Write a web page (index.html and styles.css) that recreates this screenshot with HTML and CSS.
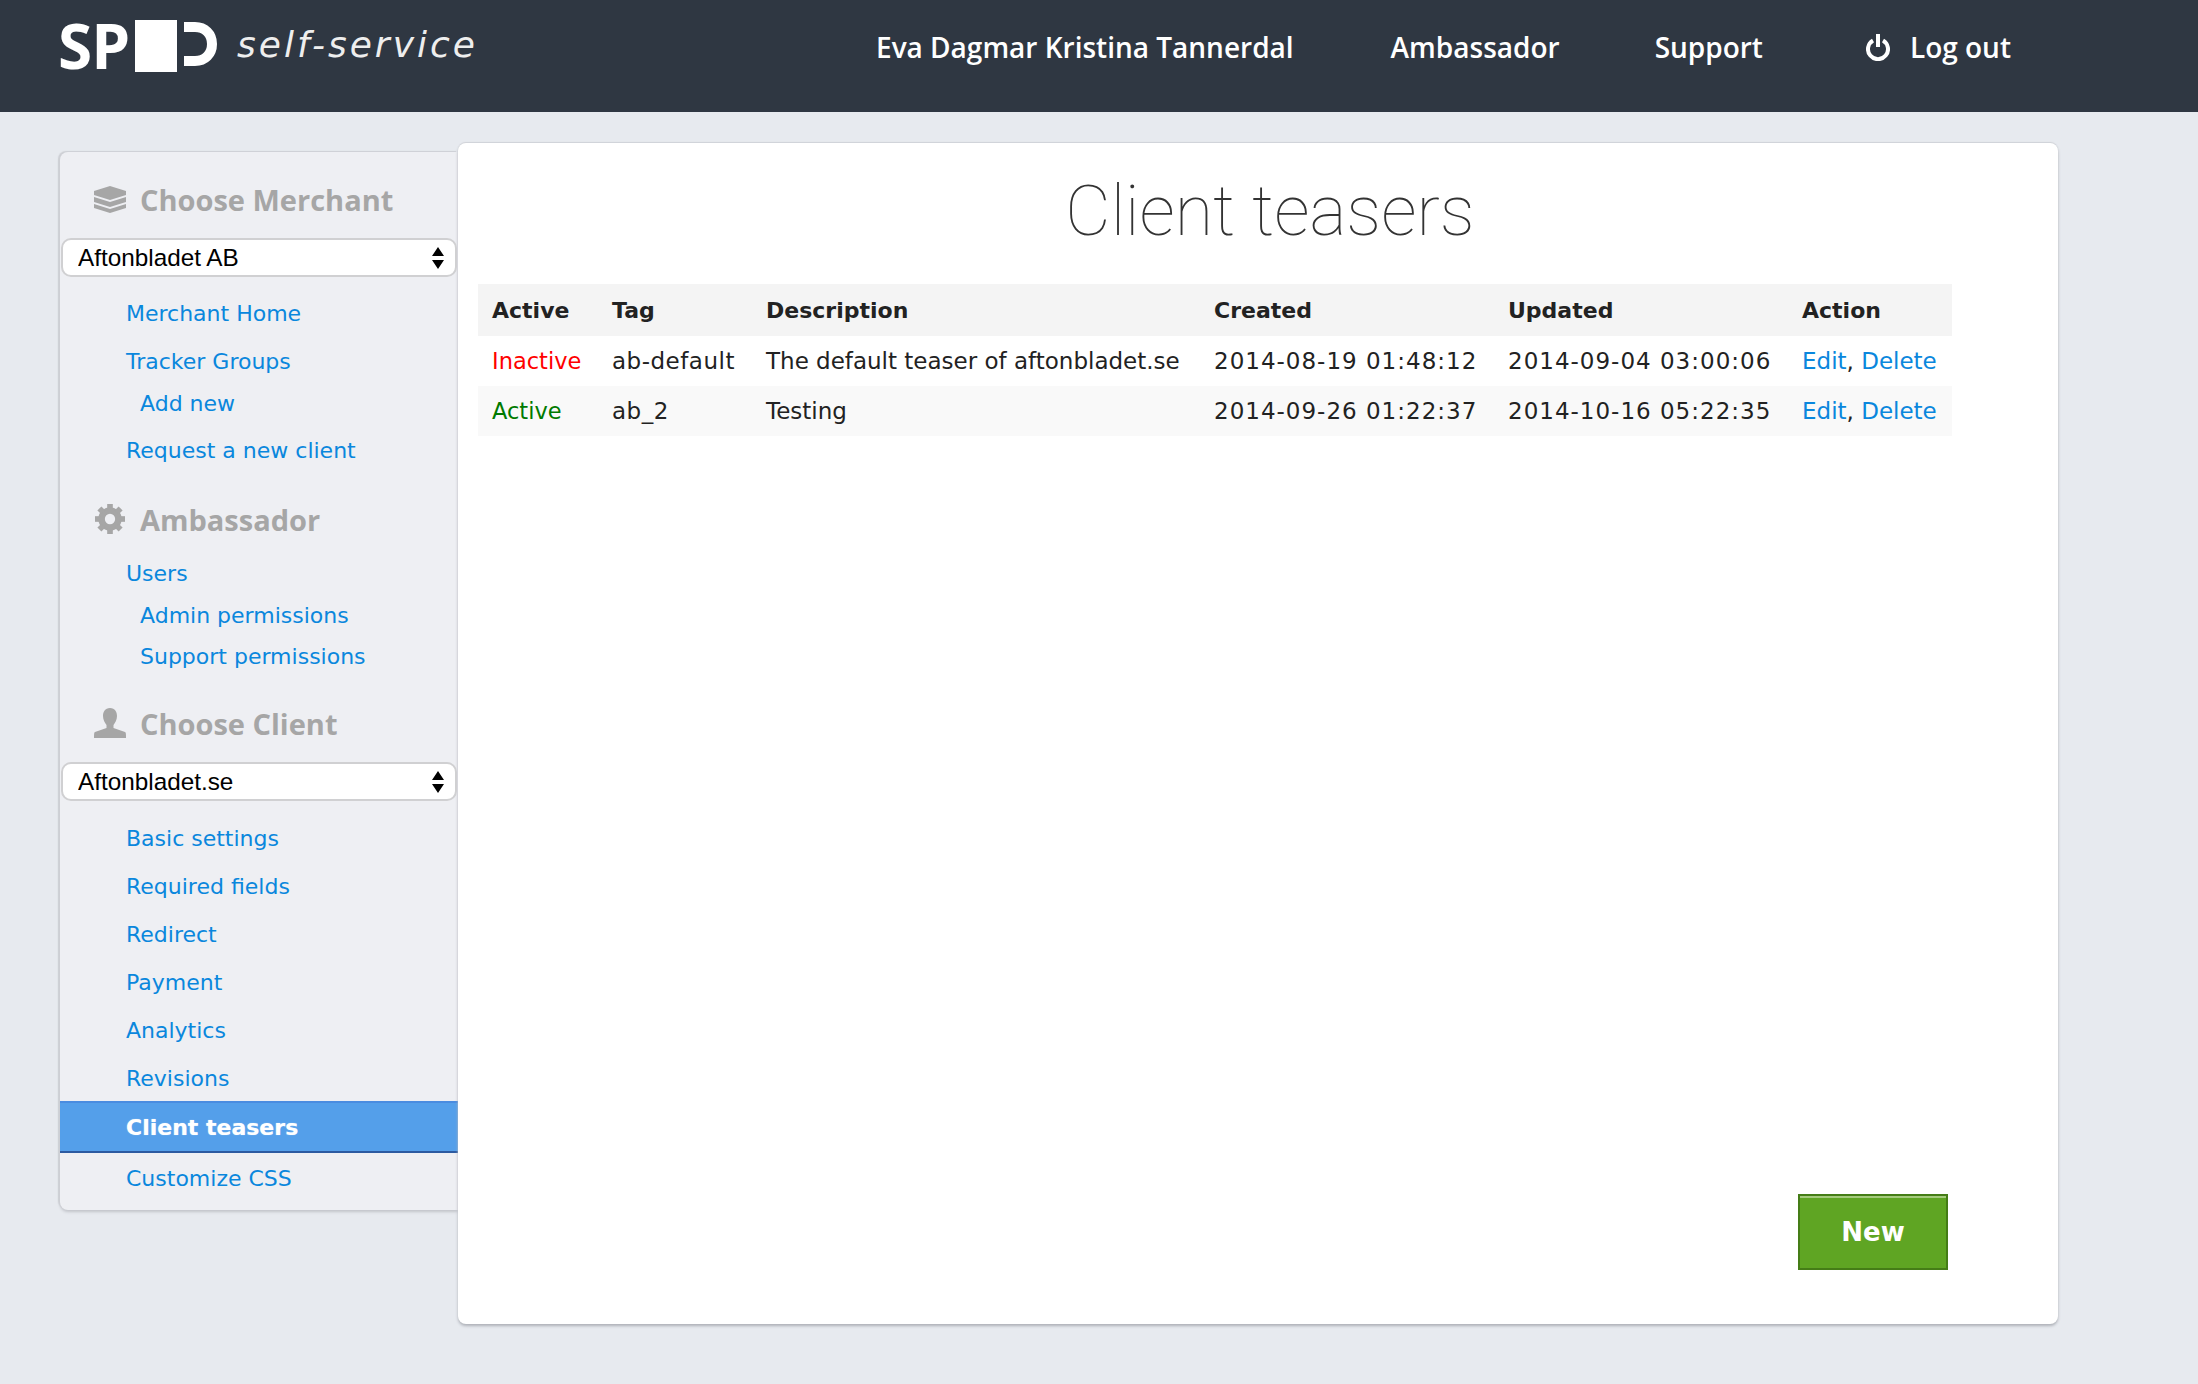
FILE: index.html
```html
<!DOCTYPE html>
<html lang="en">
<head>
  <meta charset="UTF-8">
  <title>Client teasers</title>
  <link rel="stylesheet" href="styles.css">
</head>
<body>

  <header class="topbar">
    <div class="logo">
      <span class="logo-sp">SP</span>
      <span class="logo-box"></span>
      <svg class="logo-d" width="34" height="46" viewBox="0 0 34 46"><path d="M0 6H11C21 6 28 13 28 23S21 40 11 40H0" fill="none" stroke="#fff" stroke-width="10"/></svg>
      <span class="logo-sub">self-service</span>
    </div>
    <nav class="topnav">
      <a class="topnav-name" href="#">Eva Dagmar Kristina Tannerdal</a>
      <a class="topnav-amb" href="#">Ambassador</a>
      <a class="topnav-sup" href="#">Support</a>
      <a class="topnav-out" href="#">
        <svg width="24" height="28" viewBox="0 0 24 28"><path d="M7 7.500A10 10 0 1 0 17 7.500" fill="none" stroke="#fff" stroke-width="4"/><path d="M12 1V14" stroke="#fff" stroke-width="4"/></svg>
        Log out
      </a>
    </nav>
  </header>

  <div class="page">
    <aside class="sidebar">
      <h3 class="side-title first">
        <svg class="side-icon" width="32" height="28" viewBox="0 0 32 28"><path d="M16 1L32 6V10L16 15L0 10V6Z" fill="#a6a6a6"/><path d="M0 12L16 17L32 12V17L16 22L0 17Z" fill="#a6a6a6"/><path d="M0 19L16 24L32 19V23L16 28L0 23Z" fill="#a6a6a6"/></svg>
        Choose Merchant
      </h3>
      <div class="select-wrap">
        <select class="side-select"><option>Aftonbladet AB</option></select>
        <svg class="select-arrows" width="12" height="22" viewBox="0 0 12 22"><path d="M6 0L12 9H0Z M0 13H12L6 22Z"/></svg>
      </div>
      <ul class="side-links merchant">
        <li><a href="#">Merchant Home</a></li>
        <li><a href="#">Tracker Groups</a></li>
        <li class="sub first-sub"><a href="#">Add new</a></li>
        <li class="after-sub"><a href="#">Request a new client</a></li>
      </ul>

      <h3 class="side-title amb">
        <svg class="side-icon" width="32" height="30" viewBox="0 0 32 32"><circle cx="16" cy="16" r="9" fill="none" stroke="#a6a6a6" stroke-width="7"/><g fill="#a6a6a6"><rect x="13" y="0" width="6" height="6"/><rect x="13" y="26" width="6" height="6"/><rect x="0" y="13" width="6" height="6"/><rect x="26" y="13" width="6" height="6"/><rect x="13" y="0" width="6" height="6" transform="rotate(45 16 16)"/><rect x="13" y="26" width="6" height="6" transform="rotate(45 16 16)"/><rect x="0" y="13" width="6" height="6" transform="rotate(45 16 16)"/><rect x="26" y="13" width="6" height="6" transform="rotate(45 16 16)"/></g></svg>
        Ambassador
      </h3>
      <ul class="side-links ambassador">
        <li><a href="#">Users</a></li>
        <li class="sub first-sub"><a href="#">Admin permissions</a></li>
        <li class="sub"><a href="#">Support permissions</a></li>
      </ul>

      <h3 class="side-title client">
        <svg class="side-icon" width="32" height="30" viewBox="0 0 32 30"><path d="M16 0C11 0 9 4 9 8C9 12 11 15 12.500 17V20L1 24C0 24.500 0 26 0 30H32C32 26 32 24.500 31 24L19.500 20V17C21 15 23 12 23 8C23 4 21 0 16 0Z" fill="#a6a6a6"/></svg>
        Choose Client
      </h3>
      <div class="select-wrap">
        <select class="side-select"><option>Aftonbladet.se</option></select>
        <svg class="select-arrows" width="12" height="22" viewBox="0 0 12 22"><path d="M6 0L12 9H0Z M0 13H12L6 22Z"/></svg>
      </div>
      <ul class="side-links clients">
        <li><a href="#">Basic settings</a></li>
        <li><a href="#">Required fields</a></li>
        <li><a href="#">Redirect</a></li>
        <li><a href="#">Payment</a></li>
        <li><a href="#">Analytics</a></li>
        <li><a href="#">Revisions</a></li>
        <li class="current"><a href="#">Client teasers</a></li>
        <li><a href="#">Customize CSS</a></li>
      </ul>
    </aside>

    <main class="panel">
      <h1 class="panel-title">Client teasers</h1>
      <table class="teasers">
        <colgroup>
          <col class="c-active"><col class="c-tag"><col class="c-desc"><col class="c-date"><col class="c-date"><col>
        </colgroup>
        <thead>
          <tr><th>Active</th><th>Tag</th><th>Description</th><th>Created</th><th>Updated</th><th>Action</th></tr>
        </thead>
        <tbody>
          <tr>
            <td class="inactive">Inactive</td><td class="tag">ab-default</td><td>The default teaser of aftonbladet.se</td>
            <td class="date">2014-08-19 01:48:12</td><td class="date">2014-09-04 03:00:06</td>
            <td><a href="#">Edit</a>, <a href="#">Delete</a></td>
          </tr>
          <tr class="odd">
            <td class="active">Active</td><td class="tag">ab_2</td><td>Testing</td>
            <td class="date">2014-09-26 01:22:37</td><td class="date">2014-10-16 05:22:35</td>
            <td><a href="#">Edit</a>, <a href="#">Delete</a></td>
          </tr>
        </tbody>
      </table>
      <a class="btn-new" href="#">New</a>
    </main>
  </div>

</body>
</html>
```

FILE: styles.css
```css
body {
  margin: 0;
  background: #e7eaef;
  font-family: "DejaVu Sans", sans-serif;
  font-size: 22px;
  color: #222;
  min-height: 1384px;
}

a {
  color: #0a87dd;
  text-decoration: none;
}

/* top bar */
.topbar {
  height: 112px;
  background: #2f3742;
  display: flex;
  align-items: flex-start;
}

.logo {
  display: flex;
  align-items: flex-start;
  margin-left: 58px;
  padding-top: 20px;
}

.logo-sp {
  font-family: "Open Sans", sans-serif;
  font-weight: 700;
  font-size: 62px;
  line-height: 50px;
  color: #fff;
  letter-spacing: -1px;
  width: 77px;
}

.logo-box {
  width: 42px;
  height: 52px;
  background: #fff;
  margin-right: 7px;
}

.logo-d {
  margin-top: 1px;
}

.logo-sub {
  font-family: "DejaVu Sans", sans-serif;
  font-style: italic;
  font-weight: 200;
  font-size: 36px;
  line-height: 50px;
  color: #eee;
  margin-left: 19px;
  letter-spacing: 3px;
  white-space: nowrap;
  width: 240px;
}

.topnav {
  display: flex;
  align-items: center;
  height: 94px;
  font-size: 28px;
  margin-left: 399px;
}

.topnav a {
  color: #fff;
  display: flex;
  align-items: center;
  font-family: "Open Sans", sans-serif;
  font-weight: 600;
}

.topnav-amb {
  margin-left: 97px;
}

.topnav-sup {
  margin-left: 95px;
}

.topnav-out {
  margin-left: 103px;
}

.topnav-out svg {
  margin-right: 20px;
}

/* layout */
.page {
  display: flex;
  align-items: flex-start;
  padding-left: 60px;
}

.sidebar {
  width: 398px;
  box-sizing: border-box;
  height: 1058px;
  margin-top: 40px;
  background: #eeeff3;
  border-radius: 8px 0 0 8px;
  box-shadow: -2px -1px 1px #cdcfd4, 0 2px 3px #c2c4ca;
  padding-top: 1px;
}

.side-title {
  display: flex;
  align-items: center;
  margin: 0;
  padding-left: 34px;
  font-family: "Open Sans", sans-serif;
  font-size: 29px;
  font-weight: 700;
  color: #a6a6a6;
  height: 42px;
}

.side-icon {
  margin-right: 14px;
  flex: none;
}

.side-title.first {
  margin-top: 25px;
}

.side-title.amb {
  margin-top: 23px;
}

.side-title.client {
  margin-top: 25px;
}

.select-wrap {
  position: relative;
  margin: 18px 1px 0 1px;
  height: 39px;
}

.side-select {
  appearance: none;
  width: 100%;
  height: 39px;
  box-sizing: border-box;
  border: 2px solid #d0d0d2;
  border-radius: 10px;
  background: #fff;
  color: #000;
  padding-left: 15px;
  font-family: "Liberation Sans", sans-serif;
  font-size: 24.300px;
}

.select-arrows {
  position: absolute;
  right: 13px;
  top: 9px;
}

.side-links {
  list-style: none;
  margin: 0;
  padding: 0;
  font-size: 22px;
}

.side-links li {
  height: 48px;
  line-height: 48px;
  padding-left: 66px;
}

.side-links li.sub {
  height: 41px;
  line-height: 41px;
  padding-left: 80px;
}

.side-links li.first-sub {
  margin-top: -3px;
}

.side-links li.after-sub {
  margin-top: 3px;
}

.side-links.merchant {
  margin-top: 13px;
}

.side-links.ambassador {
  margin-top: 10px;
}

.side-links.clients {
  margin-top: 14px;
}

.side-links li.current {
  box-sizing: border-box;
  height: 52px;
  line-height: 50px;
  background: #549fea;
  border-top: 2px solid #4a8ce0;
  border-bottom: 2px solid #2c5aa0;
  margin-top: -2px;
  margin-bottom: 2px;
}

.side-links li.current a {
  color: #fff;
  font-weight: 700;
  text-shadow: 0 0 1px rgba(255, 255, 255, 0.6);
}

/* main panel */
.panel {
  width: 1600px;
  height: 1181px;
  box-sizing: border-box;
  margin-top: 31px;
  background: #fff;
  border-radius: 8px;
  box-shadow: 0 -1px 1px #cfd2d7, 0 2px 3px #aeb1b8;
  padding: 0 106px 54px 20px;
  display: flex;
  flex-direction: column;
}

.panel-title {
  margin: 23px 0 0 0;
  height: 118px;
  padding-left: 110px;
  text-align: center;
  font-family: Roboto, sans-serif;
  font-weight: 100;
  font-size: 70px;
  line-height: 90px;
  color: #333;
}

.teasers {
  table-layout: fixed;
  width: 1474px;
  border-collapse: collapse;
  font-size: 23px;
}

.c-active { width: 120px; }
.c-tag { width: 154px; }
.c-desc { width: 448px; }
.c-date { width: 294px; }

.teasers th {
  height: 52px;
  padding: 0 0 0 14px;
  text-align: left;
  background: #f4f4f4;
  font-size: 22px;
  font-weight: 700;
}

.teasers td {
  height: 50px;
  padding: 0 0 0 14px;
  white-space: nowrap;
}

.teasers tr.odd td {
  background: #f9f9f9;
}

.teasers td.date {
  letter-spacing: 1px;
}

.teasers td.tag {
  letter-spacing: 0.5px;
}

.teasers td.inactive {
  color: #ff0000;
  font-size: 22.500px;
}

.teasers td.active {
  color: #007a00;
  font-size: 22.500px;
}

.btn-new {
  margin-top: auto;
  align-self: flex-end;
  box-sizing: border-box;
  width: 150px;
  height: 76px;
  line-height: 72px;
  margin-right: 4px;
  text-align: center;
  background: #5fa523;
  border: 2px solid #457d17;
  box-shadow: inset 0 2px 0 #a5cb7d;
  color: #fff;
  font-weight: 700;
  font-size: 26px;
}
```
